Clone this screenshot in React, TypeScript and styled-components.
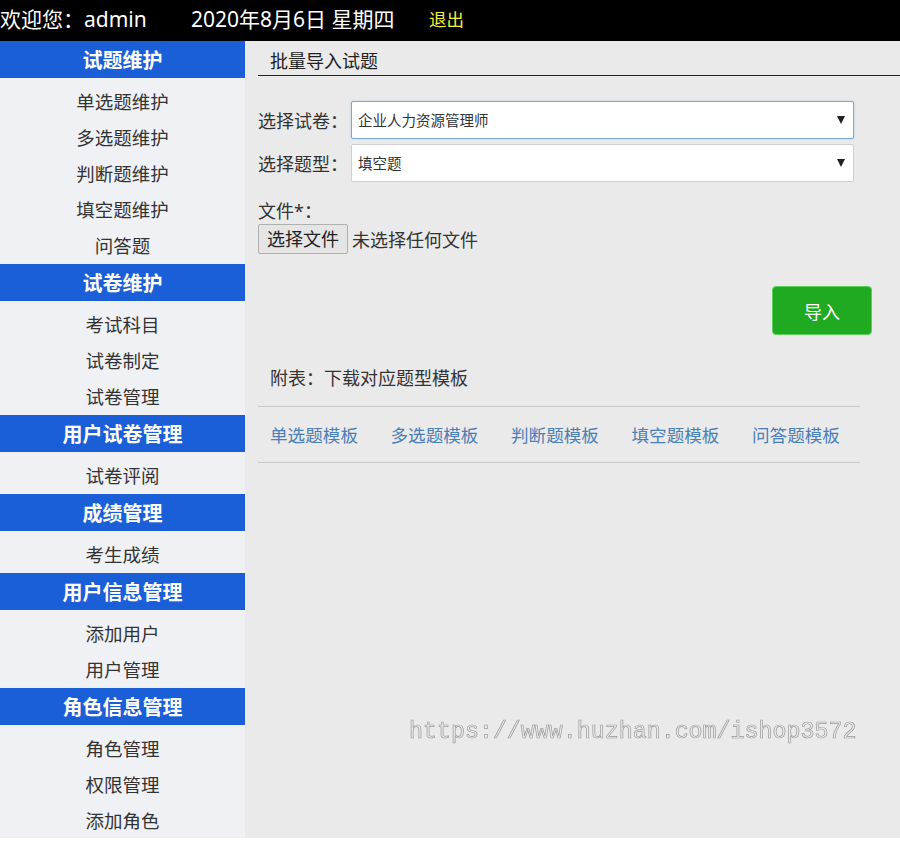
import React from "react";
import styled, { createGlobalStyle } from "styled-components";

const GlobalStyle = createGlobalStyle`
  html, body { margin: 0; padding: 0; background: #ffffff; }
  body { font-family: "Noto Sans", "Noto Sans CJK SC", sans-serif; }
  * { box-sizing: border-box; }
`;

const Page = styled.div`
  width: 900px;
  height: 838px;
  display: flex;
  flex-direction: column;
  overflow: hidden;
`;

const TopBar = styled.header`
  height: 41px;
  flex: none;
  background: #000;
  color: #fff;
  display: flex;
  align-items: center;
  padding-bottom: 5px;
  font-size: 21px;
  font-family: "Noto Sans", "Noto Sans CJK SC", sans-serif;
  white-space: nowrap;
`;

const Welcome = styled.span`
  width: 191px;
`;

const DateText = styled.span`
  width: 238px;
`;

const Logout = styled.a`
  color: #f4f33a;
  font-size: 17.5px;
  text-decoration: none;
`;

const Body = styled.div`
  flex: 1;
  display: flex;
  min-height: 0;
`;

const Sidebar = styled.nav`
  width: 245px;
  flex: none;
  background: #eff1f5;
  display: flex;
  flex-direction: column;
`;

const GroupHeader = styled.div`
  height: 37px;
  flex: none;
  background: #1a5fd7;
  color: #fff;
  font-weight: 700;
  font-size: 20px;
  display: flex;
  align-items: center;
  justify-content: center;
`;

const ItemList = styled.ul`
  list-style: none;
  margin: 0;
  padding: 5px 0 1px;
`;

const Item = styled.li`
  height: 36px;
  display: flex;
  align-items: center;
  justify-content: center;
  font-size: 18.5px;
  color: #333;
`;

const Main = styled.main`
  position: relative;
  flex: 1;
  background: #eaeaea;
  padding: 8px 0 0 13px;
`;

const TitleBar = styled.div`
  height: 27px;
  border-bottom: 1.5px solid #222;
  padding-left: 12px;
  font-size: 18px;
  color: #222;
  line-height: 24px;
`;

const Form = styled.div`
  margin-top: 25px;
  display: flex;
  flex-direction: column;
  gap: 5px;
  width: 596px;
`;

const FormRow = styled.div`
  display: flex;
  align-items: center;
`;

const Label = styled.label`
  width: 93px;
  font-size: 18px;
  color: #333;
`;

const SelectWrap = styled.div`
  position: relative;
  flex: 1;
`;

const Select = styled.select<{ $focused?: boolean }>`
  appearance: none;
  -webkit-appearance: none;
  width: 100%;
  height: 38px;
  background: #fff;
  border: 1px solid ${(p) => (p.$focused ? "#7ea6dc" : "#cfcfcf")};
  box-shadow: ${(p) => (p.$focused ? "0 0 2px #a8c4ec" : "none")};
  border-radius: 2px;
  padding: 0 30px 0 6px;
  font-size: 14.5px;
  color: #333;
  font-family: "Noto Sans", "Noto Sans CJK SC", sans-serif;
  outline: none;
`;

const Arrow = styled.span`
  position: absolute;
  right: 9px;
  top: 15px;
  width: 0;
  height: 0;
  border-left: 4px solid transparent;
  border-right: 4px solid transparent;
  border-top: 8px solid #222;
  pointer-events: none;
`;

const FileBlock = styled.div`
  margin-top: 17px;
  display: flex;
  flex-direction: column;
`;

const FileLabel = styled.div`
  font-size: 18px;
  color: #333;
  line-height: 25px;
`;

const FileRow = styled.div`
  display: flex;
  align-items: center;
  gap: 4px;
`;

const FileButton = styled.button`
  height: 30px;
  padding: 0 8px;
  background: #e5e5e5;
  border: 1px solid #b0b0b0;
  border-radius: 2px;
  font-size: 18px;
  color: #222;
  font-family: "Noto Sans", "Noto Sans CJK SC", sans-serif;
  line-height: 1;
`;

const FileText = styled.span`
  font-size: 18px;
  color: #333;
`;

const ActionRow = styled.div`
  margin-top: 32px;
  display: flex;
  justify-content: flex-end;
  padding-right: 28px;
`;

const ImportButton = styled.button`
  width: 100px;
  height: 49px;
  background: #1faa22;
  border: 1px solid #5ad05a;
  border-radius: 4px;
  color: #fff;
  font-size: 18px;
  font-family: "Noto Sans", "Noto Sans CJK SC", sans-serif;
`;

const AppendixTitle = styled.div`
  margin-top: 31px;
  padding-left: 12px;
  font-size: 18px;
  color: #333;
  line-height: 24px;
`;

const TemplateTable = styled.div`
  margin-top: 16px;
  width: 602px;
  height: 57px;
  border-top: 1px solid #c9c9c9;
  border-bottom: 1px solid #c9c9c9;
  display: flex;
  align-items: center;
  gap: 32.5px;
  padding-left: 12px;
`;

const TemplateLink = styled.a`
  font-size: 17.6px;
  color: #4a7fb5;
  text-decoration: none;
  white-space: nowrap;
`;

const Watermark = styled.div`
  position: absolute;
  left: 164px;
  top: 678px;
  font-family: "Liberation Mono", monospace;
  font-size: 23.3px;
  color: #ececec;
  -webkit-text-stroke: 0.7px #9a9a9a;
  white-space: nowrap;
  pointer-events: none;
  will-change: transform;
  transform: translateZ(0);
  -webkit-font-smoothing: antialiased;
`;

const groups: { title: string; items: string[] }[] = [
  { title: "试题维护", items: ["单选题维护", "多选题维护", "判断题维护", "填空题维护", "问答题"] },
  { title: "试卷维护", items: ["考试科目", "试卷制定", "试卷管理"] },
  { title: "用户试卷管理", items: ["试卷评阅"] },
  { title: "成绩管理", items: ["考生成绩"] },
  { title: "用户信息管理", items: ["添加用户", "用户管理"] },
  { title: "角色信息管理", items: ["角色管理", "权限管理", "添加角色"] },
];

const templates = ["单选题模板", "多选题模板", "判断题模板", "填空题模板", "问答题模板"];

export default function App() {
  return (
    <>
      <GlobalStyle />
      <Page>
        <TopBar>
          <Welcome>欢迎您：admin</Welcome>
          <DateText>2020年8月6日 星期四</DateText>
          <Logout href="#">退出</Logout>
        </TopBar>
        <Body>
          <Sidebar>
            {groups.map((g) => (
              <React.Fragment key={g.title}>
                <GroupHeader>{g.title}</GroupHeader>
                <ItemList>
                  {g.items.map((it) => (
                    <Item key={it}>{it}</Item>
                  ))}
                </ItemList>
              </React.Fragment>
            ))}
          </Sidebar>
          <Main>
            <TitleBar>批量导入试题</TitleBar>
            <Form>
              <FormRow>
                <Label>选择试卷：</Label>
                <SelectWrap>
                  <Select $focused defaultValue="hr">
                    <option value="hr">企业人力资源管理师</option>
                  </Select>
                  <Arrow />
                </SelectWrap>
              </FormRow>
              <FormRow>
                <Label>选择题型：</Label>
                <SelectWrap>
                  <Select defaultValue="fill">
                    <option value="fill">填空题</option>
                  </Select>
                  <Arrow />
                </SelectWrap>
              </FormRow>
            </Form>
            <FileBlock>
              <FileLabel>文件*：</FileLabel>
              <FileRow>
                <FileButton>选择文件</FileButton>
                <FileText>未选择任何文件</FileText>
              </FileRow>
            </FileBlock>
            <ActionRow>
              <ImportButton>导入</ImportButton>
            </ActionRow>
            <AppendixTitle>附表：下载对应题型模板</AppendixTitle>
            <TemplateTable>
              {templates.map((t) => (
                <TemplateLink key={t} href="#">
                  {t}
                </TemplateLink>
              ))}
            </TemplateTable>
            <Watermark>https://www.huzhan.com/ishop3572</Watermark>
          </Main>
        </Body>
      </Page>
    </>
  );
}
